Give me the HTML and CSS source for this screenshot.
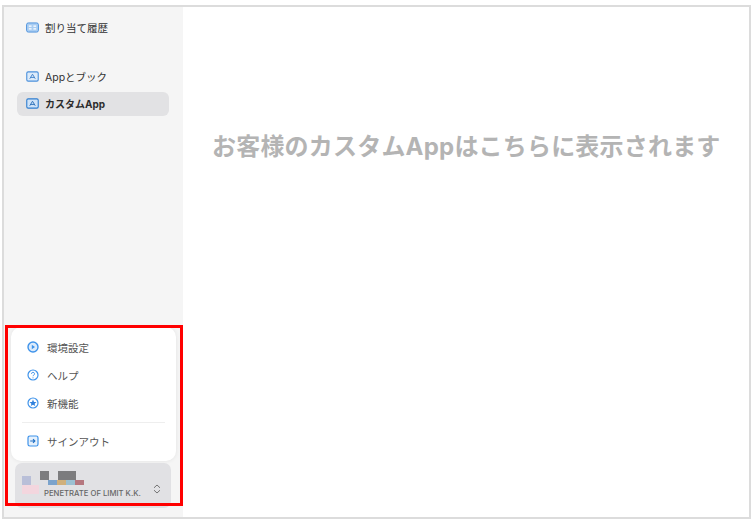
FILE: index.html
```html
<!DOCTYPE html>
<html lang="ja">
  <head>
    <meta charset="UTF-8" />
    <meta name="viewport" content="width=device-width, initial-scale=1.0" />
    <title>カスタムApp</title>
    <link rel="stylesheet" href="styles.css">
  </head>
  <body>
    <div class="frame">
      <aside class="sidebar">
        <nav class="nav">
          <a class="nav-item nav-history">
            <svg class="nav-icon" viewBox="0 0 14 12"><rect x="0.5" y="1" width="13" height="10" rx="2" fill="#a9cdf2" stroke="#4a90dc"/><path d="M3 4.5h3M3 7.5h3M8 4.5h3M8 7.5h3" stroke="#fff" stroke-width="1.2"/></svg>
            <span>割り当て履歴</span>
          </a>
          <a class="nav-item nav-books">
            <svg class="nav-icon" viewBox="0 0 14 12"><rect x="0.75" y="1" width="12.5" height="10" rx="1.5" fill="#dcebfa" stroke="#4a90dc" stroke-width="1.2"/><path d="M4 8.5 7 3.5l3 5M5 7h4" fill="none" stroke="#3c7fc9"/></svg>
            <span>Appとブック</span>
          </a>
          <a class="nav-item nav-active">
            <svg class="nav-icon" viewBox="0 0 14 12"><rect x="0.75" y="1" width="12.5" height="10" rx="1.5" fill="#cfe3f8" stroke="#2f7ed0" stroke-width="1.2"/><path d="M4 8.5 7 3.5l3 5M5 7h4" fill="none" stroke="#2a6fb8"/></svg>
            <span>カスタムApp</span>
          </a>
        </nav>

        <div class="menu">
          <a class="menu-item">
            <svg class="menu-icon" viewBox="0 0 12 12"><circle cx="6" cy="6" r="5" fill="#dcebfb" stroke="#3f93ea" stroke-width="1.4"/><path d="M4.8 3.8 8 6 4.8 8.2Z" fill="#3f93ea"/></svg>
            <span>環境設定</span>
          </a>
          <a class="menu-item">
            <svg class="menu-icon" viewBox="0 0 12 12"><circle cx="6" cy="6" r="5" fill="#fff" stroke="#3f93ea" stroke-width="1.2"/><path d="M4.5 4.8A1.5 1.5 0 1 1 6.6 6.2C6.1 6.5 6 6.7 6 7.2" fill="none" stroke="#3f93ea"/><circle cx="6" cy="8.8" r="0.6" fill="#3f93ea"/></svg>
            <span>ヘルプ</span>
          </a>
          <a class="menu-item">
            <svg class="menu-icon" viewBox="0 0 12 12"><circle cx="6" cy="6" r="5" fill="#fff" stroke="#3f93ea" stroke-width="1.2"/><path d="M6 2.6 7 4.9l2.5.2-1.9 1.6.6 2.4L6 7.8 3.8 9.1l.6-2.4-1.9-1.6L5 4.9Z" fill="#2f80dc"/></svg>
            <span>新機能</span>
          </a>
          <div class="menu-divider"></div>
          <a class="menu-item">
            <svg class="menu-icon" viewBox="0 0 12 12"><rect x="1" y="1" width="10" height="10" rx="1.8" fill="#e6f1fc" stroke="#3f93ea" stroke-width="1.2"/><path d="M3.2 6h4.6M6 4.2 7.9 6 6 7.8" fill="none" stroke="#1f6fc4" stroke-width="1.1"/></svg>
            <span>サインアウト</span>
          </a>
        </div>

        <div class="account">
          <div class="logo">
            <div class="logo-row logo-top">
              <i class="px px-grey"></i>
              <i class="px px-wide"></i>
            </div>
            <div class="logo-row logo-mid">
              <i class="px px-lav"></i>
              <i class="px px-blue"></i>
              <i class="px px-sand"></i>
              <i class="px px-teal"></i>
              <i class="px px-rose"></i>
            </div>
            <i class="px px-pink"></i>
          </div>
          <span class="account-name">PENETRATE OF LIMIT K.K.</span>
          <svg class="updown" viewBox="0 0 8 10"><path d="M1 3.8 4 1l3 2.8M1 6.2 4 9l3-2.8" fill="none" stroke="#666" stroke-width="0.9"/></svg>
        </div>
      </aside>

      <main class="content">
        <p class="empty-text">お客様のカスタムAppはこちらに表示されます</p>
      </main>

      <div class="highlight"></div>
    </div>
  </body>
</html>
```

FILE: styles.css
```css
/* Page */
body {
  margin: 0;
  background: #fff;
  font-family: "Inter", "Noto Sans CJK JP", sans-serif;
  color: #444;
}

.frame {
  position: relative;
  display: flex;
  box-sizing: border-box;
  width: 749px;
  height: 514px;
  margin: 5px 0 0 2px;
  border: 2px solid #dcdcdc;
  overflow: hidden;
}

/* Sidebar */
.sidebar {
  display: flex;
  flex-direction: column;
  width: 179px;
  background: #f5f5f5;
}

.nav {
  flex-grow: 1;
  padding: 9px 14px 0 13px;
}

.nav-item {
  display: flex;
  align-items: center;
  gap: 6px;
  box-sizing: border-box;
  height: 24px;
  padding: 0 0 1px 9px;
  border-radius: 6px;
  font-size: 10.5px;
  color: #333;
}

.nav-history {
  margin-bottom: 25px;
}

.nav-books {
  margin-bottom: 3px;
}

.nav-active {
  background: #e2e2e4;
  font-size: 10px;
  font-weight: 700;
  color: #2c2c2c;
}

.nav-icon {
  width: 13px;
  height: 11px;
  flex-shrink: 0;
}

/* Popup menu */
.menu {
  margin: 0 7px 2px 7px;
  padding: 6px 11px 6px 11px;
  background: #fff;
  border-radius: 10px;
  box-shadow: 0 0 4px rgba(0, 0, 0, 0.08);
}

.menu-item {
  display: flex;
  align-items: center;
  gap: 8px;
  height: 28px;
  padding-left: 5px;
  font-size: 10.5px;
  color: #555;
}

.menu-icon {
  width: 12px;
  height: 12px;
  flex-shrink: 0;
}

.menu-divider {
  height: 1px;
  margin: 5px 0 4px;
  background: #eee;
}

/* Account switcher */
.account {
  position: relative;
  display: flex;
  align-items: flex-end;
  box-sizing: border-box;
  height: 45px;
  margin: 0 12px 9px 11px;
  padding: 0 10px 10px 7px;
  background: #e1e1e4;
  border-radius: 7px;
}

.logo {
  position: absolute;
  left: 7px;
  top: 8px;
  width: 63px;
}

.logo-row {
  display: flex;
}

.px {
  display: block;
}

.logo-top {
  gap: 9px;
  padding-left: 18px;
  height: 9px;
}

.px-grey {
  width: 9px;
  height: 9px;
  background: #7c7c7e;
}

.px-wide {
  width: 18px;
  height: 9px;
  background: #7c7c7e;
}

.logo-mid {
  height: 5px;
}

.px-lav {
  width: 9px;
  height: 9px;
  margin-top: -4px;
  margin-right: 17px;
  background: #b9bfd8;
}

.px-blue {
  width: 9px;
  height: 5px;
  background: #7ba3cc;
}

.px-sand {
  width: 9px;
  height: 5px;
  background: #d0b07c;
}

.px-teal {
  width: 9px;
  height: 5px;
  background: #9cc0d2;
}

.px-rose {
  width: 9px;
  height: 5px;
  background: #b5777f;
}

.px-pink {
  width: 17px;
  height: 9px;
  background: #f3d6de;
}

.account-name {
  flex-grow: 1;
  padding-left: 22px;
  font-size: 7.7px;
  font-weight: 500;
  color: #666;
  white-space: nowrap;
}

.updown {
  width: 8px;
  height: 10px;
  margin-bottom: 4px;
}

/* Main area */
.content {
  flex-grow: 1;
  padding: 123px 0 0 29px;
  background: #fff;
}

.empty-text {
  margin: 0;
  font-size: 24px;
  font-weight: 700;
  line-height: 34px;
  letter-spacing: 0.2px;
  color: #b4b4b4;
  white-space: nowrap;
}

/* Red annotation box */
.highlight {
  position: absolute;
  left: 1px;
  top: 318px;
  width: 172px;
  height: 175px;
  border: 3px solid #ff0000;
}
```
